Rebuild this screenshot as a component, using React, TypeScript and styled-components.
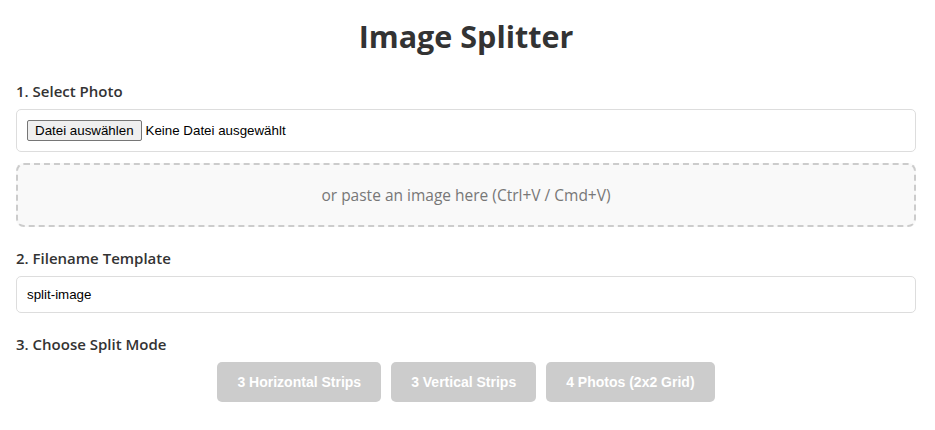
import React from "react";
import styled, { createGlobalStyle } from "styled-components";

const GlobalStyle = createGlobalStyle`
  body {
    margin: 0;
    background: #ffffff;
    font-family: "Open Sans", "Noto Sans", sans-serif;
    color: #333333;
  }
`;

const Page = styled.div`
  padding: 17px 19px 17px 16px;
`;

const Title = styled.h1`
  margin: 0 0 26px 0;
  font-size: 30.5px;
  line-height: 38px;
  font-weight: 700;
  text-align: center;
  color: #333333;
`;

const Section = styled.div`
  margin-bottom: 21px;
`;

const Label = styled.label`
  display: block;
  margin-bottom: 8px;
  font-size: 15px;
  line-height: 20px;
  font-weight: 600;
  color: #333333;
`;

const FileBox = styled.div`
  display: flex;
  align-items: center;
  gap: 4px;
  border: 1px solid #dddddd;
  border-radius: 5px;
  padding: 10px;
  background: #ffffff;
  font-family: "Liberation Sans", Arial, sans-serif;
  font-size: 13.33px;
  color: #000000;
`;

const HiddenInput = styled.input`
  display: none;
`;

const PickButton = styled.label`
  display: inline-block;
  box-sizing: border-box;
  height: 21px;
  padding: 1px 7px;
  line-height: 17px;
  border: 1px solid #767676;
  border-radius: 2px;
  background: #efefef;
  color: #000000;
  cursor: default;
`;

const FileStatus = styled.span`
  line-height: 21px;
`;

const DropZone = styled.div`
  margin-top: 11px;
  border: 2px dashed #cccccc;
  border-radius: 8px;
  background: #f9f9f9;
  padding: 20px;
  font-size: 15.5px;
  line-height: 20px;
  text-align: center;
  color: #777777;
`;

const TextInput = styled.input`
  display: block;
  box-sizing: border-box;
  width: 100%;
  border: 1px solid #dddddd;
  border-radius: 5px;
  padding: 10px;
  font-family: "Liberation Sans", Arial, sans-serif;
  font-size: 13.33px;
  color: #000000;
  outline: none;
`;

const ButtonRow = styled.div`
  display: flex;
  justify-content: center;
  gap: 10px;
`;

const ModeButton = styled.button`
  border: none;
  border-radius: 5px;
  background: #cccccc;
  color: #ffffff;
  padding: 12px 20px;
  font-family: "Liberation Sans", Arial, sans-serif;
  font-size: 14px;
  line-height: 16px;
  font-weight: 700;
  cursor: not-allowed;
`;

const modes = ["3 Horizontal Strips", "3 Vertical Strips", "4 Photos (2x2 Grid)"];

export default function App() {
  return (
    <>
      <GlobalStyle />
      <Page>
        <Title>Image Splitter</Title>
        <Section>
          <Label>1. Select Photo</Label>
          <FileBox>
            <HiddenInput id="photo" type="file" accept="image/*" />
            <PickButton htmlFor="photo">Datei auswählen</PickButton>
            <FileStatus>Keine Datei ausgewählt</FileStatus>
          </FileBox>
          <DropZone>or paste an image here (Ctrl+V / Cmd+V)</DropZone>
        </Section>
        <Section>
          <Label>2. Filename Template</Label>
          <TextInput type="text" defaultValue="split-image" />
        </Section>
        <Section>
          <Label>3. Choose Split Mode</Label>
          <ButtonRow>
            {modes.map((m) => (
              <ModeButton key={m} disabled>
                {m}
              </ModeButton>
            ))}
          </ButtonRow>
        </Section>
      </Page>
    </>
  );
}
